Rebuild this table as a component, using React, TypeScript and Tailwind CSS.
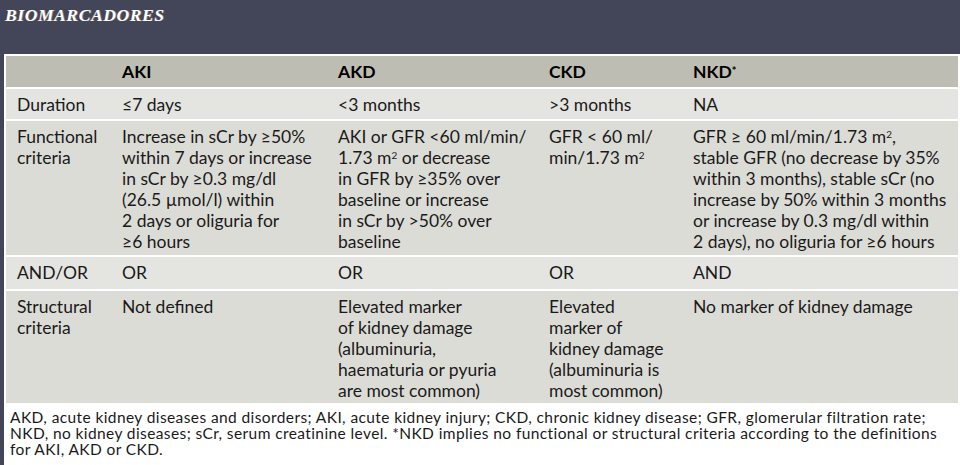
import React from "react";

const cols = "grid grid-cols-[105px_216px_211px_144px_1fr] pl-[11px]";

function Row({ bg, h, cells, bold }: { bg: string; h: string; cells: React.ReactNode[]; bold?: boolean }) {
  return (
    <div className={`${cols} ${bg} ${h} ${bold ? "font-bold text-black items-center text-[17.5px]" : "text-[#1a1a1a] pt-[5px]"}`}>
      {cells.map((c, i) => (
        <div key={i} className="leading-[21px]">
          {c}
        </div>
      ))}
    </div>
  );
}

export default function App() {
  return (
    <div
      className="w-[960px] h-[465px] overflow-hidden bg-[#434658] flex flex-col"
      style={{ fontFamily: "Lato, 'Open Sans', sans-serif" }}
    >
      <div className="h-[54px] pl-[5px] pt-[2px] shrink-0">
        <span
          className="text-white font-bold italic text-[17.5px] tracking-[0.6px] [text-shadow:1px_0_0_rgba(255,200,150,0.35)]"
          style={{ fontFamily: "'Liberation Serif', serif" }}
        >
          BIOMARCADORES
        </span>
      </div>
      <div className="ml-[4px] bg-white pt-[2px] px-[2px] flex flex-col gap-[2px] text-[17.5px] flex-1">
        <Row
          bg="bg-[#bebdb4]"
          h="h-[31px]"
          bold
          cells={[
            "",
            "AKI",
            "AKD",
            "CKD",
            <span>
              NKD<sup className="text-[11px] relative -top-[3px]">*</sup>
            </span>,
          ]}
        />
        <Row
          bg="bg-[#e4e4e0]"
          h="h-[30px]"
          cells={["Duration", "≤7 days", "<3 months", ">3 months", "NA"]}
        />
        <Row
          bg="bg-[#dcdcd7]"
          h="h-[134px]"
          cells={[
            <>Functional<br />criteria</>,
            <>Increase in sCr by ≥50%<br />within 7 days or increase<br />in sCr by ≥0.3 mg/dl<br />(26.5 µmol/l) within<br />2 days or oliguria for<br />≥6 hours</>,
            <>AKI or GFR &lt;60 ml/min/<br />1.73 m<sup className="text-[10px]">2</sup> or decrease<br />in GFR by ≥35% over<br />baseline or increase<br />in sCr by &gt;50% over<br />baseline</>,
            <>GFR &lt; 60 ml/<br />min/1.73 m<sup className="text-[10px]">2</sup></>,
            <>GFR ≥ 60 ml/min/1.73 m<sup className="text-[10px]">2</sup>,<br />stable GFR (no decrease by 35%<br />within 3 months), stable sCr (no<br />increase by 50% within 3 months<br />or increase by 0.3 mg/dl within<br />2 days), no oliguria for ≥6 hours</>,
          ]}
        />
        <Row
          bg="bg-[#e4e4e0]"
          h="h-[32px]"
          cells={["AND/OR", "OR", "OR", "OR", "AND"]}
        />
        <Row
          bg="bg-[#dcdcd7]"
          h="h-[112px]"
          cells={[
            <>Structural<br />criteria</>,
            "Not defined",
            <>Elevated marker<br />of kidney damage<br />(albuminuria,<br />haematuria or pyuria<br />are most common)</>,
            <>Elevated<br />marker of<br />kidney damage<br />(albuminuria is<br />most common)</>,
            "No marker of kidney damage",
          ]}
        />
        <div className="pl-[4px] pt-[4px] text-[15.5px] leading-[16px] tracking-[0.4px] text-[#1a1a1a]">
          AKD, acute kidney diseases and disorders; AKI, acute kidney injury; CKD, chronic kidney disease; GFR, glomerular filtration rate;
          <br />
          NKD, no kidney diseases; sCr, serum creatinine level. *NKD implies no functional or structural criteria according to the definitions
          <br />
          for AKI, AKD or CKD.
        </div>
      </div>
    </div>
  );
}
